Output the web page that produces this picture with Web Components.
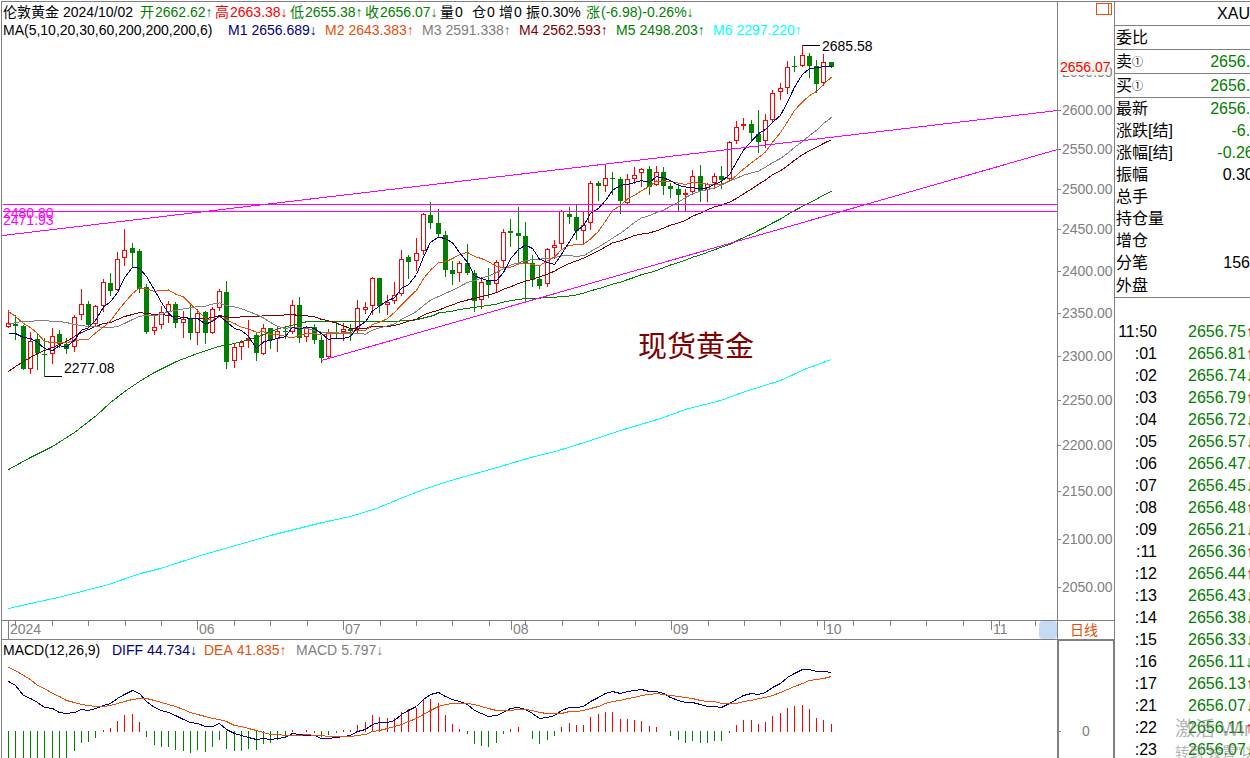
<!DOCTYPE html>
<html lang="zh">
<head>
<meta charset="utf-8">
<title>伦敦黄金</title>
<style>
  body {
    margin: 0;
    padding: 1px 0 0 1px;
    height: 100vh;
    box-sizing: border-box;
    overflow: hidden;
    background: #fff;
    color: #000;
    font-family: "Liberation Sans", "Noto Sans CJK SC", sans-serif;
    font-size: 14px;
    line-height: 18px;
    --line: #808080;
    --up: #f00;
    --down: #008000;
    --orange: #e6500a;
    --navy: #000080;
    --maroon: #800000;
    --magenta: #f0f;
    --cyan: #0ff;
  }
</style>
</head>
<body>
<quote-app></quote-app>

<script>
// one entry per day: high, body top, body bottom, low, r = rising / g = falling
const CANDLES = `310,323,327,327,r 315,324,326,339,g 325,326,369,369,g 332,341,369,373,r 333,339,353,369,g
338,354,355,376,g 328,336,354,363,r 330,334,344,347,g 338,344,349,353,g 315,317,347,351,r
289,304,315,319,r 301,304,325,327,g 305,306,324,325,r 279,282,306,311,r 273,283,291,295,g
252,259,290,290,r 229,250,258,265,r 243,248,253,266,g 249,251,289,292,g 284,287,332,333,g
316,327,331,334,r 306,312,325,328,r 301,304,312,322,r 302,304,323,327,g 311,319,323,337,r
305,318,333,339,g 309,313,333,344,r 311,312,333,343,g 307,309,333,333,r 289,291,308,310,r
281,292,362,368,g 344,347,361,367,r 340,342,347,359,r 320,338,341,347,r 333,335,353,360,g
324,328,354,354,r 328,328,340,348,g 327,331,339,351,r 326,331,332,338,g 300,305,332,333,r
297,305,338,342,g 326,328,337,341,r 324,327,340,343,g 336,340,358,362,g 329,333,357,357,r
322,332,333,338,g 323,329,332,340,r 324,329,331,340,g 300,308,329,333,r 302,307,310,313,r
277,278,306,314,r 278,278,306,312,g 295,302,305,314,r 282,295,301,303,r 250,259,294,295,r
255,257,262,278,g 238,253,261,270,r 213,214,251,254,r 202,215,223,228,g 209,223,234,237,g
231,235,270,276,g 261,270,274,284,g 261,263,273,281,r 244,263,273,274,g 270,273,301,311,g
277,282,300,308,r 268,281,285,297,g 260,262,284,291,r 229,232,261,267,r 219,231,233,246,g
207,233,236,262,g 222,236,263,301,g 255,263,280,286,g 266,279,286,288,g 248,249,284,286,r
240,245,248,258,r 210,211,244,249,r 207,214,217,223,g 205,217,231,239,g 212,225,231,244,r
181,183,223,229,r 181,183,186,200,g 164,178,186,191,r 172,178,179,194,g 177,179,201,213,g
174,179,203,203,r 167,175,179,183,r 168,169,173,186,r 166,169,187,194,g 166,172,185,185,r
167,172,186,194,g 183,186,189,197,g 184,189,195,210,g 189,193,195,211,r 170,176,192,194,r
165,176,191,201,g 183,184,190,201,r 173,176,183,188,r 166,176,180,188,g 141,142,179,181,r
121,127,141,143,r 118,124,126,129,r 120,124,133,141,g 110,134,142,152,g 114,120,141,147,r
90,93,120,122,r 83,88,92,99,r 61,67,88,93,r 56,66,67,71,g 45,55,66,66,r
53,56,66,77,g 60,66,84,92,g 54,62,83,85,r 62,62,67,67,g`
  .split(/\s+/)
  .map((s) => s.split(","))
  .map(([high, top, bottom, low, dir]) => ({ high: +high, top: +top, bottom: +bottom, low: +low, up: dir === "r" }));

// the averages need days from before the first candle, so their heads are stored
const AVERAGES = [
  { days: 60, color: "--down", head: [[8,469],[30,457],[52,446],[74,432],[96,415],[110,402],[127,389],[139,381],[154,372],[176,361],[197,353],[218,346],[234,343],[256,337],[278,328],[299,323],[307,321],[387,321],[413,320],[433,315]] },
  { days: 30, color: "--maroon", head: [371,366,361,357,353,350,347,344,341,336,332,329,326,323,322,319,316,314,312,313,314,314,315,316,317,318,318,318,317] },
  { days: 20, color: "--line", head: [324,322,321,321,320,320,321,321,322,324,325,326,326,327,327,326,323,319,316] },
  { days: 10, color: "--orange", head: [311,316,323,327,333,341,342,342,342] },
  { days: 5, color: "--navy", head: [333,333,337,338] },
];
const LONG_AVERAGE = [[8,608],[30,603],[62,596],[108,584],[140,573],[160,568],[200,555],[235,545],[270,535],[322,522],[350,516],[376,508],[400,498],[423,489],[447,481],[500,466],[530,457],[555,451],[587,441],[620,430],[660,418],[685,409],[720,400],[745,391],[780,380],[806,368],[831,359]];

// 731 is the zero line
const MACD = [760,760,760,760,760,760,760,760,760,750,742,741,737,730,728,721,715,714,722,736,744,746,746,749,750,752,749,751,746,739,748,750,750,748,749,743,742,739,736,730,731,730,732,736,734,732,730,730,725,722,715,717,718,718,712,709,708,700,699,703,715,724,729,733,743,745,746,742,733,729,727,731,738,743,739,735,727,723,725,725,717,714,712,712,719,719,720,721,726,727,731,735,739,742,740,742,742,740,740,732,725,720,720,724,722,716,713,708,706,705,709,718,720,724];
const DIFF = [681,685,695,698,702,707,708,712,713,712,709,710,708,705,703,698,694,690,693,701,707,710,712,715,719,722,723,726,726,723,729,733,735,737,739,738,739,738,737,733,734,735,735,738,738,737,736,735,731,729,724,722,722,720,714,710,706,699,694,692,696,699,701,704,710,713,716,715,712,708,707,709,713,718,717,715,710,707,707,706,701,697,693,691,693,691,690,689,691,691,693,697,700,702,702,704,706,706,707,703,699,695,693,694,692,687,683,677,673,669,669,671,671,672];
const DEA = [667,670,675,679,685,688,693,696,700,702,704,705,706,706,705,703,701,699,698,698,700,702,704,706,709,712,714,716,718,719,721,725,726,728,730,732,734,734,735,735,735,734,735,735,736,736,736,736,735,734,731,730,728,726,724,721,718,714,710,706,704,703,703,703,704,706,708,710,710,710,709,709,710,712,713,713,713,711,711,710,708,706,703,701,700,698,697,695,694,693,694,695,696,697,698,700,701,701,703,703,703,701,700,698,697,695,692,689,686,683,680,679,678,676];

const TICKS = `11:50 2656.75↑,:01 2656.81↑,:02 2656.74↓,:03 2656.79↑,:04 2656.72↓,:05 2656.57↓,:06 2656.47↓,:07 2656.45↓,:08 2656.48↑,:09 2656.21↓,:11 2656.36↑,:12 2656.44↑,:13 2656.43↓,:14 2656.38↓,:15 2656.33↓,:16 2656.11↓,:17 2656.13↑,:21 2656.07↓,:22 2656.11↑,:23 2656.07↓`;

const dayX = (i) => Math.round(8 + 7.28 * i);
const polyline = (points, color) =>
  `<polyline points="${points.map(([x, y]) => `${x + 0.5},${y + 0.5}`).join(" ")}" style="stroke:var(${color})"/>`;
const series = (values, color) => polyline(values.map((y, i) => [dayX(i), y]), color);
const vline = (x, y1, y2, color) => `<path d="M${x + 0.5} ${y1}V${y2}" style="stroke:var(${color})"/>`;

const SVG_STYLE = `
  svg { display: block; width: 100%; height: 100%; shape-rendering: crispEdges; }
  polyline, path, line { fill: none; stroke-width: 1; vector-effect: non-scaling-stroke; }
`;

// name and value of an indicator, e.g. M1 2656.689
class IndicatorValue extends HTMLElement {
  connectedCallback() {
    this.attachShadow({ mode: "open" });
    this.shadowRoot.innerHTML = `
      <style>
        :host { display: flex; gap: 4px; white-space: nowrap; }
        :host([tight]) { gap: 1px; }
      </style>
      <span>${this.getAttribute("name")}</span><slot></slot>`;
    this.style.color = `var(${this.getAttribute("color") || "--text"}, #000)`;
  }
}
customElements.define("indicator-value", IndicatorValue);

// text pinned to a point of a chart
class ChartLabel extends HTMLElement {
  connectedCallback() {
    this.attachShadow({ mode: "open" });
    this.shadowRoot.innerHTML = `
      <style>
        :host { position: absolute; transform: translateY(-50%); white-space: nowrap; }
        :host([centered]) { transform: translate(-50%, -50%); }
      </style>
      <slot></slot>`;
    this.style.left = ((this.getAttribute("x") - 2) / 1055) * 100 + "%";
    this.style.top = ((this.getAttribute("y") - 2) / 618) * 100 + "%";
  }
}
customElements.define("chart-label", ChartLabel);

class PriceChart extends HTMLElement {
  constructor() {
    super();
    this.attachShadow({ mode: "open" });
    this.shadowRoot.innerHTML = `
      <style>
        :host { display: block; position: relative; min-width: 0; min-height: 0; overflow: hidden; }
        ${SVG_STYLE}
        svg { position: absolute; inset: 0; }
        header { position: relative; padding: 1px 0 0 1px; }
        .row { display: flex; height: 18px; white-space: nowrap; }
        .symbol { width: 60px; }
        .date { width: 77px; }
        .ohlc > * { flex: none; }
        .price { width: 75px; }
        .volume { width: 32px; }
        .open { width: 27px; }
        .range { width: 60px; }
        .params { width: 225px; }
        .ma indicator-value { width: 97px; }
        .level { color: var(--magenta); }
        .title { color: var(--maroon); font-size: 29px; line-height: 36px; }
      </style>
      <svg viewBox="2 2 1055 618" preserveAspectRatio="none">
        ${this._candles()}
        ${polyline(LONG_AVERAGE, "--cyan")}
        ${AVERAGES.map((a) => this._average(a)).join("")}
        ${polyline([[2, 204], [1057, 204]], "--magenta")}
        ${polyline([[2, 211], [1057, 211]], "--magenta")}
        ${polyline([[2, 235], [1057, 110]], "--magenta")}
        ${polyline([[321, 360], [1057, 149]], "--magenta")}
        <path d="M802.5 45.5H820M44.5 376.5H62" stroke="#000"/>
      </svg>
      <header>
        <div class="row ohlc">
          <span class="symbol">伦敦黄金</span><span class="date">2024/10/02</span>
          <indicator-value tight class="price" name="开" color="--down">2662.62↑</indicator-value>
          <indicator-value tight class="price" name="高" color="--up">2663.38↓</indicator-value>
          <indicator-value tight class="price" name="低" color="--down">2655.38↑</indicator-value>
          <indicator-value tight class="price" name="收" color="--down">2656.07↓</indicator-value>
          <indicator-value tight class="volume" name="量">0</indicator-value>
          <indicator-value tight class="open" name="仓">0</indicator-value>
          <indicator-value tight class="open" name="增">0</indicator-value>
          <indicator-value tight class="range" name="振">0.30%</indicator-value>
          <indicator-value tight name="涨" color="--down">(-6.98)-0.26%↓</indicator-value>
        </div>
        <div class="row ma">
          <span class="params">MA(5,10,20,30,60,200,200,200,6)</span>
          <indicator-value name="M1" color="--navy">2656.689↓</indicator-value>
          <indicator-value name="M2" color="--orange">2643.383↑</indicator-value>
          <indicator-value name="M3" color="--line">2591.338↑</indicator-value>
          <indicator-value name="M4" color="--maroon">2562.593↑</indicator-value>
          <indicator-value name="M5" color="--down">2498.203↑</indicator-value>
          <indicator-value name="M6" color="--cyan">2297.220↑</indicator-value>
        </div>
      </header>
      <chart-label x="822" y="46">2685.58</chart-label>
      <chart-label x="64" y="368">2277.08</chart-label>
      <chart-label class="level" x="3" y="213">2480.80</chart-label>
      <chart-label class="level" x="3" y="220">2471.93</chart-label>
      <chart-label class="title" x="696" y="347" centered>现货黄金</chart-label>`;
  }

  _candles() {
    return CANDLES.map((c, i) => {
      const x = dayX(i);
      const height = Math.max(c.bottom - c.top, 1);
      if (!c.up) {
        return vline(x, c.high, c.low + 1, "--down") +
          `<rect x="${x - 2}" y="${c.top}" width="5" height="${height}" style="fill:var(--down)"/>`;
      }
      return vline(x, c.high, c.top, "--up") + vline(x, c.bottom, c.low + 1, "--up") +
        `<path d="M${x - 1.5} ${c.top + 0.5}h4v${Math.max(height - 1, 1)}h-4z" style="stroke:var(--up)"/>`;
    }).join("");
  }

  _average({ days, color, head }) {
    const points = head.map((p, i) => (Array.isArray(p) ? p : [dayX(i), p]));
    const closes = CANDLES.map((c) => (c.up ? c.top : c.bottom - 1));
    for (let i = days - 1; i < closes.length; i++) {
      const sum = closes.slice(i - days + 1, i + 1).reduce((a, b) => a + b, 0);
      points.push([dayX(i), sum / days]);
    }
    return polyline(points, color);
  }
}
customElements.define("price-chart", PriceChart);

class PriceScale extends HTMLElement {
  constructor() {
    super();
    this.attachShadow({ mode: "open" });
    // logarithmic scale from 2600 down to 2050
    const top = (price) => ((108 + (Math.log(2600 / price) / Math.log(2600 / 2050)) * 477) / 618) * 100;
    let labels = "";
    for (let price = 2650; price >= 2050; price -= 50) {
      labels += `<span class="mark" style="top:${top(price)}%">${price}.00</span>`;
    }
    this.shadowRoot.innerHTML = `
      <style>
        :host { display: block; position: relative; color: var(--line); }
        .mark { position: absolute; left: 0; padding-left: 4px; transform: translateY(-50%); }
        .mark::before { content: ""; position: absolute; left: 0; top: 9px; width: 3px; height: 1px; background: var(--line); }
        .last { position: absolute; left: 0; top: 58px; width: 50px; padding-left: 2px; line-height: 15px; color: var(--up); background: #f0f6f0; }
        button { position: absolute; right: 1px; top: 1px; padding: 0; border: 0; background: none; line-height: 0; }
      </style>
      ${labels}
      <span class="last">2656.07</span>
      <button aria-label="窗口"><svg width="17" height="12" shape-rendering="crispEdges"><path d="M.5.5h15v11H.5zM12.5.5v11" fill="none" style="stroke:var(--orange)"/></svg></button>`;
  }
}
customElements.define("price-scale", PriceScale);

class TimeScale extends HTMLElement {
  constructor() {
    super();
    this.attachShadow({ mode: "open" });
    const minor = [15,52,88,125,161,234,270,307,380,416,452,489,525,562,598,635,708,744,780,817,853,890,926,963,999,1035];
    const major = [[197, "06"], [343, "07"], [511, "08"], [671, "09"], [824, "10"], [991, "11"]];
    const label = (x, text) => `<span style="left:${(x / 1055) * 100}%">${text}</span>`;
    this.shadowRoot.innerHTML = `
      <style>
        :host { display: block; position: relative; color: var(--line); overflow: hidden; min-width: 0; }
        ${SVG_STYLE}
        svg { position: absolute; inset: 0; }
        span { position: absolute; top: 0; line-height: 17px; }
        i { position: absolute; right: 0; top: 0; width: 18px; height: 18px; border-radius: 4px; background: #c4daf5; }
      </style>
      <svg viewBox="2 621 1055 18" preserveAspectRatio="none">
        ${vline(8, 621, 639, "--line")}
        ${minor.map((x) => vline(x, 621, 626, "--line")).join("")}
        ${major.map(([x]) => vline(x, 621, 630, "--line")).join("")}
      </svg>
      ${label(8, "2024")}${major.map(([x, text]) => label(x, text)).join("")}
      <i></i>`;
  }
}
customElements.define("time-scale", TimeScale);

class MacdChart extends HTMLElement {
  constructor() {
    super();
    this.attachShadow({ mode: "open" });
    const bars = MACD.map((y, i) => {
      if (y === 731) return "";
      return y < 731 ? vline(dayX(i), y, 732, "--up") : vline(dayX(i), 731, y + 1, "--down");
    });
    this.shadowRoot.innerHTML = `
      <style>
        :host { display: block; position: relative; min-width: 0; min-height: 0; overflow: hidden; }
        ${SVG_STYLE}
        svg { position: absolute; inset: 0; }
        header { position: relative; display: flex; padding: 1px 0 0 1px; white-space: nowrap; }
        .params { width: 109px; }
        .value { width: 92px; }
      </style>
      <svg viewBox="2 640 1055 118" preserveAspectRatio="none">
        ${bars.join("")}${series(DIFF, "--navy")}${series(DEA, "--orange")}
      </svg>
      <header>
        <span class="params">MACD(12,26,9)</span>
        <indicator-value class="value" name="DIFF" color="--navy">44.734↓</indicator-value>
        <indicator-value class="value" name="DEA" color="--orange">41.835↑</indicator-value>
        <indicator-value name="MACD" color="--line">5.797↓</indicator-value>
      </header>`;
  }
}
customElements.define("macd-chart", MacdChart);

// the panel is wider than its column, its right part runs out of the window
class QuotePanel extends HTMLElement {
  constructor() {
    super();
    this.attachShadow({ mode: "open" });
    const ticks = TICKS.split(",").map((line) => {
      const [time, price] = line.split(" ");
      const arrow = price.slice(-1);
      return `<tr><td>${time}</td><td>${price.slice(0, -1)}<b class="${arrow === "↑" ? "rise" : ""}">${arrow}</b></td></tr>`;
    });
    const row = (name, value = "", type = "") => `<tr class="${type}"><th>${name}</th><td>${value}</td></tr>`;
    this.shadowRoot.innerHTML = `
      <style>
        :host { display: block; overflow: hidden; font-size: 16px; line-height: 20px; min-width: 0; }
        table { border-spacing: 0; table-layout: fixed; white-space: nowrap; }
        th, td { box-sizing: border-box; height: 22px; padding: 0; font-weight: normal; }
        .quote { width: 153px; }
        .quote th { width: 62px; padding-left: 1px; text-align: left; }
        .quote td { text-align: right; }
        .quote .line > * { height: 24px; border-bottom: 1px solid var(--line); }
        .quote .cut td { padding-right: 18px; }
        .green td { color: var(--down); }
        small { font-size: 11px; line-height: 0; vertical-align: 1px; }
        .ticks { width: 160px; margin-top: 23px; }
        .ticks td:first-child { width: 42px; text-align: right; }
        .ticks td:last-child { padding-left: 31px; color: var(--down); }
        b { font-weight: normal; }
        .rise { color: var(--up); }
      </style>
      <table class="quote">
        ${row("", "XAU", "line cut")}
        ${row("委比", "", "line")}
        ${row("卖<small>①</small>", "2656.07", "line green")}
        ${row("买<small>①</small>", "2656.07", "line green")}
        ${row("最新", "2656.07", "green")}
        ${row("涨跌[结]", "-6.98", "green")}
        ${row("涨幅[结]", "-0.26%", "green")}
        ${row("振幅", "0.30%")}
        ${row("总手")}
        ${row("持仓量")}
        ${row("增仓")}
        ${row("分笔", "156", "cut")}
        ${row("外盘", "", "line")}
      </table>
      <table class="ticks">${ticks.join("")}</table>`;
  }
}
customElements.define("quote-panel", QuotePanel);

class SystemNotice extends HTMLElement {
  constructor() {
    super();
    this.attachShadow({ mode: "open" });
    this.shadowRoot.innerHTML = `
      <style>
        :host { position: absolute; left: calc(100% - 75px); bottom: -4px; color: rgba(128, 128, 128, .6); white-space: nowrap; pointer-events: none; }
        div { font-size: 20px; line-height: 26px; }
        p { margin: 0; font-size: 14px; line-height: 20px; }
      </style>
      <div><slot name="title"></slot></div>
      <p><slot></slot></p>`;
  }
}
customElements.define("system-notice", SystemNotice);

class QuoteApp extends HTMLElement {
  constructor() {
    super();
    this.attachShadow({ mode: "open" });
    this.shadowRoot.innerHTML = `
      <style>
        :host {
          display: grid;
          grid-template-columns: minmax(0, 1fr) 57px 135px;
          grid-template-rows: minmax(0, 1fr) 19px 118px;
          position: relative;
          box-sizing: border-box;
          height: 100%;
          border: solid var(--line);
          border-width: 1px 0 0 1px;
          overflow: hidden;
        }
        price-chart, time-scale, price-scale, .period { border-right: 1px solid var(--line); border-bottom: 1px solid var(--line); }
        quote-panel { grid-column: 3; grid-row: 1 / 4; }
        .period { display: flex; }
        button { flex: 1; padding: 0 4px 0 0; border: 0; background: none; color: var(--orange); font: inherit; line-height: 16px; }
        .zero { position: relative; margin: -1px 0 0 -1px; padding-top: 81px; text-align: center; border: 2px solid var(--line); border-bottom: 0; color: var(--line); }
        .zero::before { content: ""; position: absolute; left: 0; top: 90px; width: 2px; height: 1px; background: var(--line); }
        macd-chart { margin-right: 1px; }
      </style>
      <price-chart></price-chart>
      <price-scale></price-scale>
      <quote-panel></quote-panel>
      <time-scale></time-scale>
      <div class="period"><button>日线</button></div>
      <macd-chart></macd-chart>
      <div class="zero">0</div>
      <system-notice><span slot="title">激活 Windows</span>转到"设置"以激活 Windows。</system-notice>`;
  }
}
customElements.define("quote-app", QuoteApp);
</script>
</body>
</html>
